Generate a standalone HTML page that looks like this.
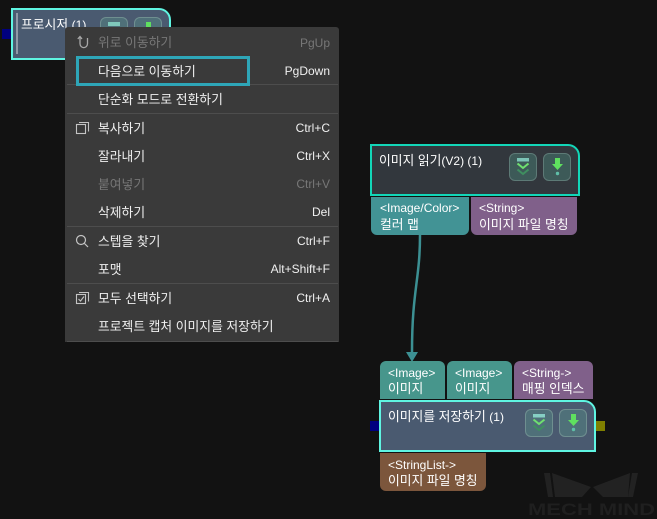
<!DOCTYPE html>
<html><head><meta charset="utf-8">
<style>
html,body{margin:0;padding:0;background:#121212;}
#r{position:relative;width:657px;height:519px;overflow:hidden;background:#121212;font-family:"Liberation Sans","Noto Sans CJK KR",sans-serif;font-size:12px;color:#fff;}
#r div,#r svg{position:absolute;box-sizing:border-box;}
.t{white-space:nowrap;line-height:14px;font-size:12.8px;}
.t.l{font-size:12px;}
.t span,.m span{font-size:12px;}
.node{border:2px solid #5ff5e2;background:#4a5a70;border-radius:0 12px 0 0;}
.btn{width:28px;height:28px;border:1px solid #6f8f90;border-radius:6px;background:#4f7079;}
.tag{border-radius:0 0 6px 6px;}
.tagT{border-radius:6px 6px 0 0;}
.m{white-space:nowrap;line-height:14px;left:98px;color:#f0f0f0;font-size:12.8px;margin-top:1px;}
.k{white-space:nowrap;line-height:14px;right:327px;color:#f0f0f0;text-align:right;}
.d{color:#777!important;}
.s{left:67px;width:271px;height:1px;background:#4d4d4d;}
</style></head><body><div id="r">

<!-- watermark -->
<svg style="left:525px;top:465px" width="132" height="54" viewBox="0 0 132 54">
<g transform="translate(10,0)">
<polygon points="9,8 15,8 18,32 13,32" fill="#222222"/>
<polygon points="17,8 56,22 47,32 20,32" fill="#222222"/>
<polygon points="97,8 103,8 98,32 93,32" fill="#222222"/>
<polygon points="95,8 58,22 68,32 93,32" fill="#222222"/>
</g>
<text x="3" y="50" font-family="Liberation Sans" font-weight="700" font-size="16.500" textLength="127" lengthAdjust="spacingAndGlyphs" fill="#1f1f1f">MECH MIND</text>
</svg>

<!-- top-left node -->
<div style="left:2px;top:29px;width:10px;height:10px;background:#00007f"></div>
<div class="node" style="left:11px;top:8px;width:160px;height:52px"></div>
<div style="left:16px;top:13px;width:2px;height:41px;background:#8f99a6"></div>
<div class="t" style="left:21px;top:18px">프로시저 <span>(1)</span></div>
<div class="btn" style="left:100px;top:17px"></div>
<div style="left:108px;top:22px;width:12px;height:4px;background:#7fc8bb"></div>
<div class="btn" style="left:134px;top:17px"></div>
<div style="left:146px;top:22px;width:5px;height:5px;background:#5fe05f"></div>

<!-- context menu -->
<div style="left:65px;top:27px;width:274px;height:315px;background:#3a3a3a;border-radius:3px 3px 0 0"></div>
<svg style="left:76px;top:35px" width="16" height="15" viewBox="0 0 16 15" fill="none" stroke="#a8a8a8" stroke-width="1.3">
<path d="M4 2 V8.500 C4 14 11.500 14 11.500 8.500 V3"/><path d="M1.800 4 L4 1.500 L6 4"/></svg>
<div class="m d" style="top:35px">위로 이동하기</div><div class="k d" style="top:36px">PgUp</div>
<div class="s" style="top:84px"></div>
<div style="left:76px;top:56px;width:174px;height:30px;border:3px solid #2ea6b8"></div>
<div class="m" style="top:64px">다음으로 이동하기</div><div class="k" style="top:64px">PgDown</div>
<div class="m" style="top:92px">단순화 모드로 전환하기</div>
<div class="s" style="top:113px"></div>

<svg style="left:75px;top:121px" width="15" height="15" viewBox="0 0 15 15" fill="none" stroke="#c4c4c4" stroke-width="1.100">
<rect x="1.500" y="3.500" width="9" height="9"/><path d="M4 1.500 H13.500 V10.500"/></svg>
<div class="m" style="top:121px">복사하기</div><div class="k" style="top:121px">Ctrl+C</div>
<div class="m" style="top:149px">잘라내기</div><div class="k" style="top:149px">Ctrl+X</div>
<div class="m d" style="top:177px">붙여넣기</div><div class="k d" style="top:177px">Ctrl+V</div>
<div class="m" style="top:205px">삭제하기</div><div class="k" style="top:205px">Del</div>
<div class="s" style="top:226px"></div>

<svg style="left:75px;top:234px" width="15" height="15" viewBox="0 0 15 15" fill="none" stroke="#c4c4c4" stroke-width="1.200">
<circle cx="6" cy="6" r="4.500"/><path d="M9.500 9.500 L13 13"/></svg>
<div class="m" style="top:234px">스텝을 찾기</div><div class="k" style="top:234px">Ctrl+F</div>
<div class="m" style="top:262px">포맷</div><div class="k" style="top:262px">Alt+Shift+F</div>
<div class="s" style="top:283px"></div>

<svg style="left:75px;top:291px" width="15" height="15" viewBox="0 0 15 15" fill="none" stroke="#c4c4c4" stroke-width="1.100">
<rect x="1.500" y="3.500" width="9" height="9"/><path d="M4 1.500 H13.500 V10.500"/><path d="M3.500 8 L5.500 10 L9 5.500"/></svg>
<div class="m" style="top:291px">모두 선택하기</div><div class="k" style="top:291px">Ctrl+A</div>
<div class="m" style="top:319px">프로젝트 캡처 이미지를 저장하기</div>
<div class="s" style="top:341px"></div>

<!-- read image node -->
<div style="left:370px;top:144px;width:210px;height:52px;border:2px solid #12d6b8;background:#32373d;border-radius:0 12px 0 0"></div>
<div class="t" style="left:379px;top:154px">이미지 읽기<span>(V2) (1)</span></div>
<div class="btn" style="left:509px;top:153px;background:#3d5a58;border-color:#5d7a76"></div>
<div class="btn" style="left:543px;top:153px;background:#3d5a58;border-color:#5d7a76"></div>
<svg style="left:509px;top:153px" width="62" height="28" viewBox="0 0 62 28" fill="none">
<rect x="8" y="5" width="12" height="3.500" fill="#7cc4b6"/>
<path d="M8.500 10.500 L14 15 L19.500 10.500" stroke="#6fe06f" stroke-width="2"/>
<path d="M8.500 16.500 L14 21 L19.500 16.500" stroke="#3f8f60" stroke-width="2"/>
<path d="M46 5 H51 V11 H54 L48.500 17 L43 11 H46 Z" fill="#5fe05f"/>
<circle cx="48.500" cy="20.500" r="1.700" fill="#5fbfa8"/>
</svg>
<div class="tag" style="left:371px;top:197px;width:98px;height:38px;background:#429395"></div>
<div class="t l" style="left:380px;top:201px">&lt;Image/Color&gt;</div>
<div class="t" style="left:380px;top:218px">컬러 맵</div>
<div class="tag" style="left:471px;top:197px;width:106px;height:38px;background:#80608a"></div>
<div class="t l" style="left:479px;top:201px">&lt;String&gt;</div>
<div class="t" style="left:479px;top:218px">이미지 파일 명칭</div>

<!-- connector -->
<svg style="left:400px;top:230px" width="40" height="135" viewBox="0 0 40 135" fill="none">
<path d="M20 5 C20 50 12 60 12 122" stroke="#3c9093" stroke-width="2.500"/>
<polygon points="6,122 18,122 12,132" fill="#3c9093"/>
</svg>

<!-- save image node -->
<div class="tagT" style="left:380px;top:361px;width:65px;height:38px;background:#47968c"></div>
<div class="t l" style="left:388px;top:366px">&lt;Image&gt;</div>
<div class="t" style="left:388px;top:382px">이미지</div>
<div class="tagT" style="left:447px;top:361px;width:65px;height:38px;background:#47968c"></div>
<div class="t l" style="left:455px;top:366px">&lt;Image&gt;</div>
<div class="t" style="left:455px;top:382px">이미지</div>
<div class="tagT" style="left:514px;top:361px;width:79px;height:38px;background:#80608a"></div>
<div class="t l" style="left:522px;top:366px">&lt;String-&gt;</div>
<div class="t" style="left:522px;top:382px">매핑 인덱스</div>

<div style="left:370px;top:421px;width:10px;height:10px;background:#00007f"></div>
<div style="left:595px;top:421px;width:10px;height:10px;background:#7f7f00"></div>
<div class="node" style="left:379px;top:400px;width:217px;height:52px"></div>
<div class="t" style="left:388px;top:410px">이미지를 저장하기 <span>(1)</span></div>
<div class="btn" style="left:525px;top:409px"></div>
<div class="btn" style="left:559px;top:409px"></div>
<svg style="left:525px;top:409px" width="62" height="28" viewBox="0 0 62 28" fill="none">
<rect x="8" y="5" width="12" height="3.500" fill="#86cfc4"/>
<path d="M8.500 10.500 L14 15 L19.500 10.500" stroke="#6fe06f" stroke-width="2"/>
<path d="M8.500 16.500 L14 21 L19.500 16.500" stroke="#3f8f60" stroke-width="2"/>
<path d="M46 5 H51 V11 H54 L48.500 17 L43 11 H46 Z" fill="#5fe05f"/>
<circle cx="48.500" cy="20.500" r="1.700" fill="#5fbfa8"/>
</svg>
<div class="tag" style="left:380px;top:453px;width:106px;height:38px;background:#7c563c"></div>
<div class="t l" style="left:388px;top:458px">&lt;StringList-&gt;</div>
<div class="t" style="left:388px;top:474px">이미지 파일 명칭</div>

</div></body></html>
